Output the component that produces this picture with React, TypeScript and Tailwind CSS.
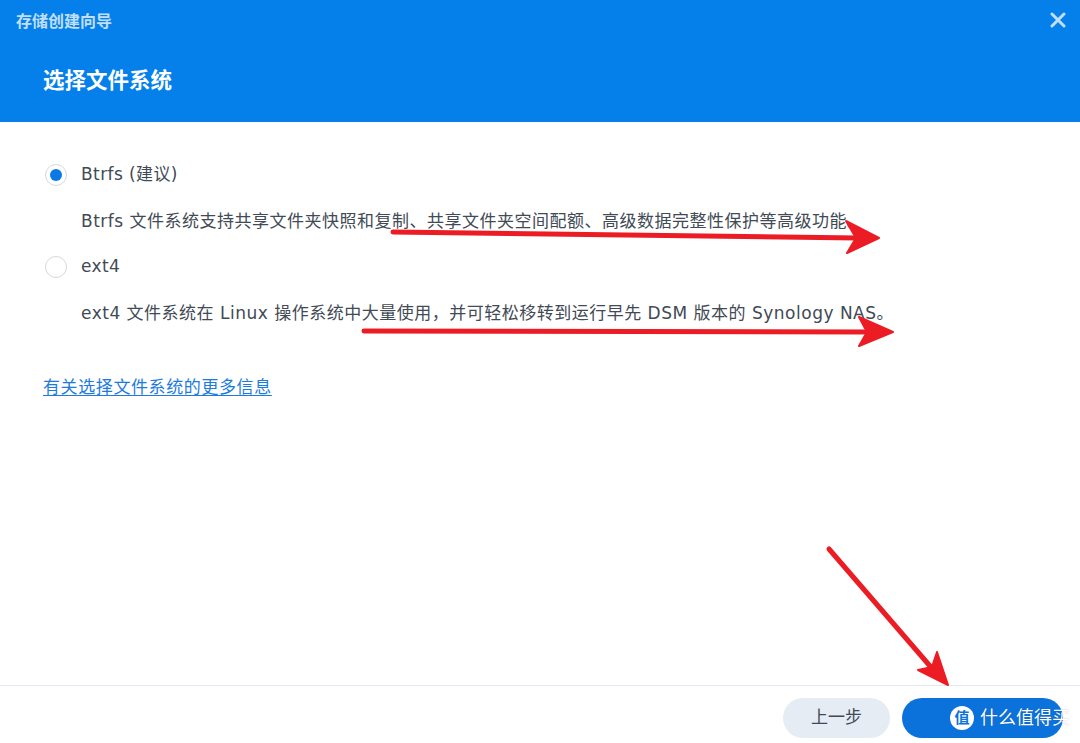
import React from "react";

const font = { fontFamily: '"DejaVu Sans", "Noto Sans CJK SC", sans-serif' };

function Radio({ checked }: { checked?: boolean }) {
  return (
    <span className="flex h-[22px] w-[22px] shrink-0 items-center justify-center rounded-full border border-[#d3d9e0] bg-white">
      {checked && <span className="h-[12px] w-[12px] rounded-full bg-[#0a79e6]" />}
    </span>
  );
}

export default function App() {
  return (
    <div className="relative flex h-[743px] w-[1080px] flex-col overflow-hidden bg-white" style={font}>
      {/* Header */}
      <div className="flex h-[122px] flex-col bg-[#0580ea]">
        <div className="flex h-[40px] items-center justify-between pl-[16px] pr-[14px]">
          <span className="text-[16px] font-bold text-white/75" style={{ fontFamily: '"Noto Sans CJK SC", sans-serif' }}>
            存储创建向导
          </span>
          <svg width="16" height="16" viewBox="0 0 16 16" className="text-white/75">
            <path d="M2 2L14 14M14 2L2 14" stroke="currentColor" strokeWidth="3" strokeLinecap="round" />
          </svg>
        </div>
        <div className="flex flex-1 items-center pl-[43px] pb-[4px]">
          <h1 className="text-[21.5px] font-bold text-white" style={{ fontFamily: '"Noto Sans CJK SC", sans-serif' }}>
            选择文件系统
          </h1>
        </div>
      </div>

      {/* Content */}
      <div className="flex flex-1 flex-col px-[45px] pt-[41px] text-[17px] text-[#414a55]">
        <div className="flex flex-col gap-[22px]">
          <label className="flex h-6 items-center gap-[14px]">
            <Radio checked />
            <span className="tracking-[0.4px]">Btrfs (建议)</span>
          </label>
          <p className="h-6 whitespace-nowrap pl-[36px] leading-6 tracking-[0.5px]">
            Btrfs 文件系统支持共享文件夹快照和复制、共享文件夹空间配额、高级数据完整性保护等高级功能。
          </p>
          <label className="flex h-6 items-center gap-[14px]">
            <Radio />
            <span className="tracking-[0.4px]">ext4</span>
          </label>
          <p className="h-6 whitespace-nowrap pl-[36px] leading-6 tracking-[0.5px]">
            ext4 文件系统在 Linux 操作系统中大量使用，并可轻松移转到运行早先 DSM 版本的 Synology NAS。
          </p>
        </div>
        <a href="#" className="mt-[50px] -ml-[2px] h-6 self-start leading-6 tracking-[0.6px] text-[#1d7be0] underline underline-offset-2">
          有关选择文件系统的更多信息
        </a>
      </div>

      {/* Footer */}
      <div className="flex h-[58px] justify-end gap-[12px] border-t border-[#e2e8ef] pr-[17px] pt-[12px]">
        <button className="h-[40px] w-[107px] rounded-full bg-[#e6ecf4] text-[17px] text-[#404a55]">上一步</button>
        <button className="flex h-[40px] w-[161px] items-center overflow-visible whitespace-nowrap rounded-full bg-[#0b72dc] pl-[48px] text-white">
          <span className="flex h-[24px] w-[24px] shrink-0 items-center justify-center rounded-full bg-white text-[15px] font-bold leading-none text-[#0b72dc]">
            值
          </span>
          <span className="ml-[6px] text-[18px] leading-none [text-shadow:0_0_1px_rgba(0,0,0,0.3)]">什么值得买</span>
        </button>
      </div>

      {/* Annotation arrows */}
      <svg className="pointer-events-none absolute left-0 top-0" width="1080" height="743">
        <g fill="#ec1c24" stroke="#ec1c24" strokeLinecap="round" strokeLinejoin="round">
          <path d="M393 232 Q620 234 858 238" strokeWidth="5" fill="none" />
          <polygon points="846,221 879,238 847,253 856,238" strokeWidth="2" />
          <path d="M364 331 Q620 331 870 332" strokeWidth="5" fill="none" />
          <polygon points="859,317 893,332 859,346 867,332" strokeWidth="2" />
          <path d="M829 549 L936 673" strokeWidth="5" fill="none" />
          <polygon points="937,652 948,685 918,670 932,667" strokeWidth="2" />
        </g>
      </svg>
    </div>
  );
}
